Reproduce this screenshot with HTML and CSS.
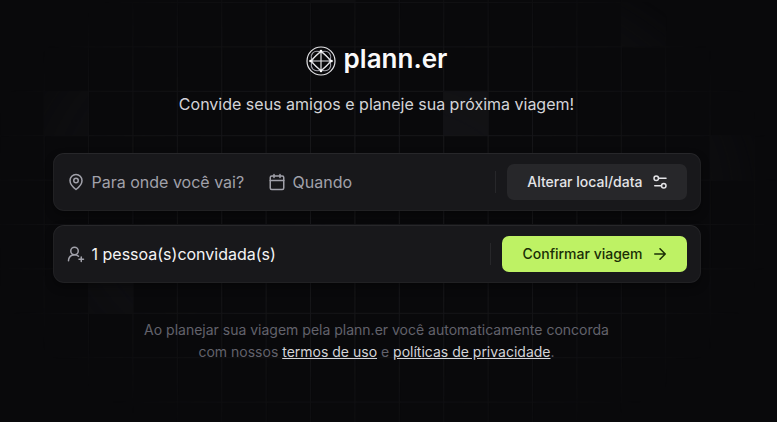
FILE: index.html
```html
<!DOCTYPE html>
<html lang="pt-BR">
<head>
<meta charset="utf-8">
<meta name="viewport" content="width=device-width, initial-scale=1">
<title>plann.er</title>
<link rel="stylesheet" href="styles.css">
</head>
<body>
<svg class="backdrop" viewBox="0 0 777 422" preserveAspectRatio="xMidYMin slice" aria-hidden="true">
  <defs>
    <pattern id="cells" width="44.4" height="44.4" patternUnits="userSpaceOnUse" x="-.8" y="2">
      <path d="M.5 0V44.4M0 .5H44.4" stroke="#1a1a1d" fill="none"/>
    </pattern>
    <radialGradient id="fade" gradientUnits="userSpaceOnUse" cx="0" cy="0" r="1" gradientTransform="translate(377 200) scale(400 270)">
      <stop offset="0" stop-color="#fff"/>
      <stop offset=".5" stop-color="#fff" stop-opacity=".7"/>
      <stop offset=".85" stop-color="#fff" stop-opacity=".3"/>
      <stop offset="1" stop-color="#fff" stop-opacity="0"/>
    </radialGradient>
    <mask id="spot" maskUnits="userSpaceOnUse" x="0" y="0" width="777" height="422">
      <rect width="777" height="422" fill="url(#fade)"/>
    </mask>
  </defs>
  <g mask="url(#spot)">
    <rect width="777" height="422" fill="url(#cells)"/>
    <g fill="#151518">
      <rect x="443" y="91" width="45" height="44"/>
      <rect x="44" y="91" width="44" height="44"/>
      <rect x="621" y="2" width="44" height="44"/>
      <rect x="710" y="135" width="44" height="45"/>
      <rect x="88" y="269" width="45" height="44"/>
      <rect x="310" y="0" width="45" height="2"/>
    </g>
  </g>
</svg>
<main class="page">
  <header class="intro">
    <h1 class="brand">
      <svg class="brand-mark" viewBox="0 0 30 30" aria-hidden="true">
        <circle cx="15" cy="15" r="14"/>
        <g class="brand-rings">
          <ellipse cx="15" cy="15" rx="11.5" ry="7.5" transform="rotate(45 15 15)"/>
          <ellipse cx="15" cy="15" rx="11.5" ry="7.5" transform="rotate(-45 15 15)"/>
        </g>
        <path d="M15 5 25.500 15 15 25 4.500 15ZM15 5V25M5 15H25"/>
        <g class="brand-dots"><circle cx="15" cy="5" r="1.3"/><circle cx="25.500" cy="15" r="1.3"/><circle cx="15" cy="25" r="1.3"/><circle cx="4.500" cy="15" r="1.3"/></g>
      </svg>
      <span>plann.er</span>
    </h1>
    <p class="tagline">Convide seus amigos e planeje sua próxima viagem!</p>
  </header>

  <form class="steps">
    <div class="row">
      <label class="field field-place">
        <svg class="icon" viewBox="0 0 24 24" aria-hidden="true"><path d="M20 10c0 6-8 12-8 12s-8-6-8-12a8 8 0 0 1 16 0Z"/><circle cx="12" cy="10" r="3"/></svg>
        <input type="text" placeholder="Para onde você vai?" aria-label="Para onde você vai?" disabled>
      </label>
      <label class="field field-date">
        <svg class="icon" viewBox="0 0 24 24" aria-hidden="true"><rect x="3" y="4" width="18" height="18" rx="2"/><path d="M8 2v4M16 2v4M3 10h18"/></svg>
        <input type="text" placeholder="Quando" aria-label="Quando" disabled>
      </label>
      <div class="action">
        <button class="button button-muted" type="button">Alterar local/data
          <svg class="icon" viewBox="0 0 24 24" aria-hidden="true"><path d="M20 7h-9M14 17H5"/><circle cx="17" cy="17" r="3"/><circle cx="7" cy="7" r="3"/></svg>
        </button>
      </div>
    </div>
    <div class="row">
      <button class="guests" type="button">
        <svg class="icon" viewBox="0 0 24 24" aria-hidden="true"><path d="M2 21a8 8 0 0 1 13.3-6M19 16v6M22 19h-6"/><circle cx="10" cy="8" r="5"/></svg>
        <span>1 pessoa(s)convidada(s)</span>
      </button>
      <div class="action">
        <button class="button button-accent" type="submit">Confirmar viagem
          <svg class="icon" viewBox="0 0 24 24" aria-hidden="true"><path d="M5 12h14M12 5l7 7-7 7"/></svg>
        </button>
      </div>
    </div>
  </form>

  <p class="legal">Ao planejar sua viagem pela plann.er você automaticamente concorda<br>
  com nossos <a href="#">termos de uso</a> e <a href="#">políticas de privacidade</a>.</p>
</main>
</body>
</html>
```
FILE: styles.css
```css
* {
  box-sizing: border-box;
}

body {
  margin: 0;
  min-height: 100vh;
  position: relative;
  padding: 39px 24px 48px 0;
  background: #09090b;
  color: #fafafa;
  font-family: Inter, "Liberation Sans", sans-serif;
  font-size: 16px;
}

.backdrop {
  position: absolute;
  inset: 0;
  z-index: -1;
  width: 100%;
  height: 100%;
}

.page {
  max-width: 648px;
  margin: 0 auto;
  text-align: center;
}

.intro {
  display: flex;
  flex-direction: column;
  align-items: center;
  gap: 13px;
}

.brand {
  display: flex;
  align-items: center;
  gap: 8px;
  margin: 0;
  font-size: 26px;
  font-weight: 600;
  line-height: 40px;
}

.brand-mark {
  width: 30px;
  height: 30px;
  margin-top: 4px;
  fill: none;
  stroke: #e4e4e7;
  stroke-width: 1.2;
}

.brand-rings {
  stroke: #a1a1aa;
  stroke-width: 1;
}

.brand-dots {
  fill: #fafafa;
  stroke: none;
}

.tagline {
  margin: 0;
  color: #d4d4d8;
  line-height: 24px;
}

.steps {
  display: flex;
  flex-direction: column;
  gap: 14px;
  margin-top: 37px;
}

.row {
  display: flex;
  align-items: center;
  height: 58px;
  padding: 0 14px;
  border-radius: 11px;
  background: #18181b;
  box-shadow: 0 4px 8px rgb(0 0 0 / 35%), inset 0 0 0 1px rgb(255 255 255 / 4%), inset 0 1px 0 rgb(255 255 255 / 3%);
}

.icon {
  flex: none;
  width: 18px;
  height: 18px;
  fill: none;
  stroke: currentColor;
  stroke-width: 2;
  stroke-linecap: round;
  stroke-linejoin: round;
}

.field,
.guests {
  display: flex;
  align-items: center;
  gap: 7px;
}

.field {
  color: #a1a1aa;
}

.field-place {
  flex: 0 0 201px;
}

.field-date {
  flex: 1;
  min-width: 0;
}

.guests .icon {
  color: #a1a1aa;
}

.field input {
  flex: 1;
  min-width: 0;
  width: 100%;
  padding: 0;
  border: 0;
  outline: 0;
  background: transparent;
  color: #fafafa;
  font: inherit;
}

.field input::placeholder {
  color: #a1a1aa;
  opacity: 1;
}

.guests {
  flex: 1;
  padding: 0;
  border: 0;
  background: transparent;
  color: #f4f4f5;
  font: inherit;
}

.action {
  display: flex;
  align-items: center;
  gap: 11px;
}

.action::before {
  content: "";
  width: 1px;
  height: 22px;
  background: #27272a;
}

.button {
  display: flex;
  align-items: center;
  gap: 8px;
  height: 36px;
  padding: 0 18px 0 20px;
  border: 0;
  border-radius: 7px;
  font: 500 14px/22px Inter, "Liberation Sans", sans-serif;
}

.button-muted {
  background: #27272a;
  color: #e4e4e7;
}

.button-accent {
  background: #bef264;
  color: #1a2e05;
}

.legal {
  margin: 36px 0 0;
  color: #62626b;
  font-size: 14px;
  line-height: 22px;
}

.legal a {
  color: #d4d4d8;
  text-decoration: underline;
}
```
